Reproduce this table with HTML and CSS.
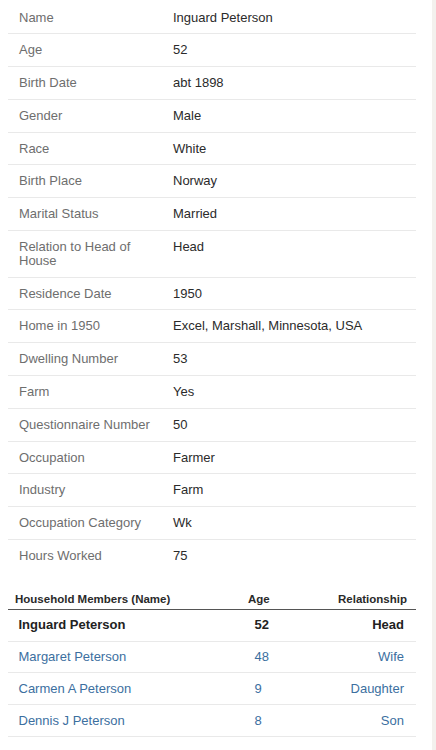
FILE: index.html
```html
<!DOCTYPE html>
<html lang="en">
<head>
<meta charset="utf-8">
<title>Inguard Peterson — 1950 Census</title>
<link rel="stylesheet" href="styles.css">
</head>
<body>
<div class="page">
  <main class="main">
    <dl class="facts">
      <div class="fact"><dt>Name</dt><dd>Inguard Peterson</dd></div>
      <div class="fact"><dt>Age</dt><dd>52</dd></div>
      <div class="fact"><dt>Birth Date</dt><dd>abt 1898</dd></div>
      <div class="fact"><dt>Gender</dt><dd>Male</dd></div>
      <div class="fact"><dt>Race</dt><dd>White</dd></div>
      <div class="fact"><dt>Birth Place</dt><dd>Norway</dd></div>
      <div class="fact"><dt>Marital Status</dt><dd>Married</dd></div>
      <div class="fact"><dt>Relation to Head of House</dt><dd>Head</dd></div>
      <div class="fact"><dt>Residence Date</dt><dd>1950</dd></div>
      <div class="fact"><dt>Home in 1950</dt><dd>Excel, Marshall, Minnesota, USA</dd></div>
      <div class="fact"><dt>Dwelling Number</dt><dd>53</dd></div>
      <div class="fact"><dt>Farm</dt><dd>Yes</dd></div>
      <div class="fact"><dt>Questionnaire Number</dt><dd>50</dd></div>
      <div class="fact"><dt>Occupation</dt><dd>Farmer</dd></div>
      <div class="fact"><dt>Industry</dt><dd>Farm</dd></div>
      <div class="fact"><dt>Occupation Category</dt><dd>Wk</dd></div>
      <div class="fact fact-last"><dt>Hours Worked</dt><dd>75</dd></div>
    </dl>

    <div class="household">
      <div class="hh-row hh-head">
        <span class="c-name">Household Members (Name)</span>
        <span class="c-age">Age</span>
        <span class="c-rel">Relationship</span>
      </div>
      <div class="hh-row hh-self">
        <span class="c-name">Inguard Peterson</span>
        <span class="c-age">52</span>
        <span class="c-rel">Head</span>
      </div>
      <div class="hh-row hh-link">
        <span class="c-name">Margaret Peterson</span>
        <span class="c-age">48</span>
        <span class="c-rel">Wife</span>
      </div>
      <div class="hh-row hh-link">
        <span class="c-name">Carmen A Peterson</span>
        <span class="c-age">9</span>
        <span class="c-rel">Daughter</span>
      </div>
      <div class="hh-row hh-link">
        <span class="c-name">Dennis J Peterson</span>
        <span class="c-age">8</span>
        <span class="c-rel">Son</span>
      </div>
    </div>
  </main>
  <div class="rail"></div>
</div>
</body>
</html>
```

FILE: styles.css
```css
html, body {
  margin: 0;
  padding: 0;
  background: #ffffff;
}

body {
  font-family: "Liberation Sans", Arial, sans-serif;
  font-size: 13px;
  color: #2b2b2b;
}

.page {
  display: flex;
  min-height: 750px;
}

.main {
  width: 416px;
  padding: 1.5px 0 0 8px;
  box-sizing: border-box;
}

.rail {
  flex: 1;
  background: #f3f1ee;
  margin-left: 16px;
}

.facts {
  margin: 0;
  width: 408px;
}

.fact {
  display: grid;
  grid-template-columns: 154px 1fr;
  border-bottom: 1px solid #e9e9e9;
}

.fact-last {
  border-bottom-color: transparent;
}

.fact dt,
.fact dd {
  margin: 0;
  padding: 9px 4px 9px 11px;
  line-height: 13.8px;
}

.fact dt {
  color: #6e6e6e;
}

.fact dd {
  color: #2b2b2b;
}

.household {
  width: 408px;
  margin-top: 19px;
}

.hh-row {
  display: grid;
  grid-template-columns: 233px 1fr 1fr;
  align-items: center;
}

.c-rel {
  text-align: right;
}

.hh-head {
  font-size: 11.5px;
  font-weight: bold;
  color: #2a2a2a;
  line-height: 14px;
  padding: 0 9px 3px 7px;
  border-bottom: 1.5px solid #555555;
}

.hh-self,
.hh-link {
  line-height: 13.8px;
  padding: 8.5px 12px 8.5px 10.5px;
  border-bottom: 1px solid #e9e9e9;
}

.hh-self {
  font-weight: bold;
  color: #222222;
}

.hh-self .c-age,
.hh-link .c-age {
  padding-left: 3px;
}

.hh-link {
  color: #3c6f9f;
}
```
